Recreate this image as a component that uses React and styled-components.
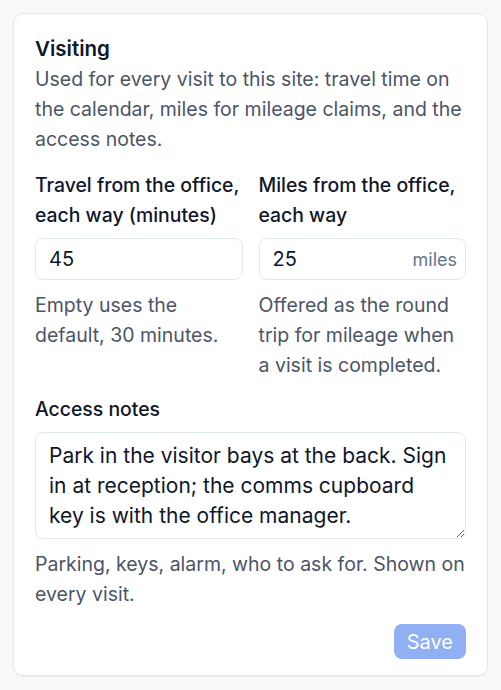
import React, { Component } from "react";
import styled, { createGlobalStyle } from "styled-components";

const GlobalStyle = createGlobalStyle`
    body {
        margin: 0;
        background: #f8f9fb;
        font-family: Inter, "Noto Sans", sans-serif;
        color: #0f172a;
    }
`;

const { Page, Card, Title, Text, Columns, Field, Label, InputBox, Input, Suffix, Notes, Footer, SaveButton } = {
    Page: styled.div`
        padding: 13px;
    `,
    Card: styled.section`
        background: #fff;
        border: 1px solid #e2e8f0;
        border-radius: 10px;
        box-shadow: 0 1px 2px rgba(15, 23, 42, 0.06);
        padding: 20px 21px 16px;
        display: flex;
        flex-direction: column;
    `,
    Title: styled.h2`
        margin: 0;
        font-size: 20.5px;
        font-weight: 600;
        line-height: 30px;
        color: #0f172a;
    `,
    Text: styled.p`
        margin: ${p => p.top || 0}px 0 0;
        font-size: 19.5px;
        line-height: 30px;
        color: #4b5565;
    `,
    Columns: styled.div`
        display: grid;
        grid-template-columns: minmax(0, 1fr) minmax(0, 1fr);
        gap: 16px;
        margin-top: 16px;
    `,
    Field: styled.div`
        display: flex;
        flex-direction: column;
        min-width: 0;
        margin-top: ${p => p.top || 0}px;
    `,
    Label: styled.label`
        font-size: 19.4px;
        font-weight: 500;
        line-height: 30px;
        color: #0f172a;
        margin-bottom: 8px;
    `,
    InputBox: styled.div`
        display: flex;
        align-items: center;
        height: 42px;
        box-sizing: border-box;
        border: 1px solid #e2e8f0;
        border-radius: 8px;
        padding: 0 8px 0 13px;
        background: #fff;
    `,
    Input: styled.input`
        flex: 1;
        min-width: 0;
        border: none;
        outline: none;
        font: inherit;
        font-size: 20px;
        color: #0f172a;
        padding: 0;
        background: transparent;
    `,
    Suffix: styled.span`
        font-size: 18px;
        color: #64748b;
    `,
    Notes: styled.textarea`
        display: block;
        box-sizing: border-box;
        width: 100%;
        height: 107px;
        border: 1px solid #e2e8f0;
        border-radius: 8px;
        padding: 8px 13px 7px;
        font: inherit;
        font-size: 21px;
        line-height: 30px;
        color: #0f172a;
        outline: none;
        resize: vertical;
    `,
    Footer: styled.div`
        display: flex;
        justify-content: flex-end;
        margin-top: 15px;
    `,
    SaveButton: styled.button`
        font: inherit;
        font-size: 20px;
        color: #fff;
        background: #2563eb;
        opacity: 0.5;
        border: none;
        border-radius: 8px;
        height: 35px;
        padding: 0 13px;
    `,
};

export default class App extends Component {
    state = {
        minutes: "45",
        miles: "25",
        notes: "Park in the visitor bays at the back. Sign in at reception; the comms cupboard key is with the office manager.",
    };

    change = key => ({ target: { value } }) => this.setState(() => ({ [key]: value }));

    render() {
        return (
            <Page>
                <GlobalStyle />
                <Card>
                    <Title>Visiting</Title>
                    <Text>
                        Used for every visit to this site: travel time on the calendar, miles for mileage claims, and the access notes.
                    </Text>
                    <Columns>
                        <Field>
                            <Label>Travel from the office, each way (minutes)</Label>
                            <InputBox>
                                <Input value={this.state.minutes} onChange={this.change("minutes")} />
                            </InputBox>
                            <Text top={10}>Empty uses the default, 30 minutes.</Text>
                        </Field>
                        <Field>
                            <Label>Miles from the office, each way</Label>
                            <InputBox>
                                <Input value={this.state.miles} onChange={this.change("miles")} />
                                <Suffix>miles</Suffix>
                            </InputBox>
                            <Text top={10}>Offered as the round trip for mileage when a visit is completed.</Text>
                        </Field>
                    </Columns>
                    <Field top={14}>
                        <Label>Access notes</Label>
                        <Notes value={this.state.notes} onChange={this.change("notes")} />
                        <Text top={10}>Parking, keys, alarm, who to ask for. Shown on every visit.</Text>
                    </Field>
                    <Footer>
                        <SaveButton disabled>Save</SaveButton>
                    </Footer>
                </Card>
            </Page>
        );
    }
}
